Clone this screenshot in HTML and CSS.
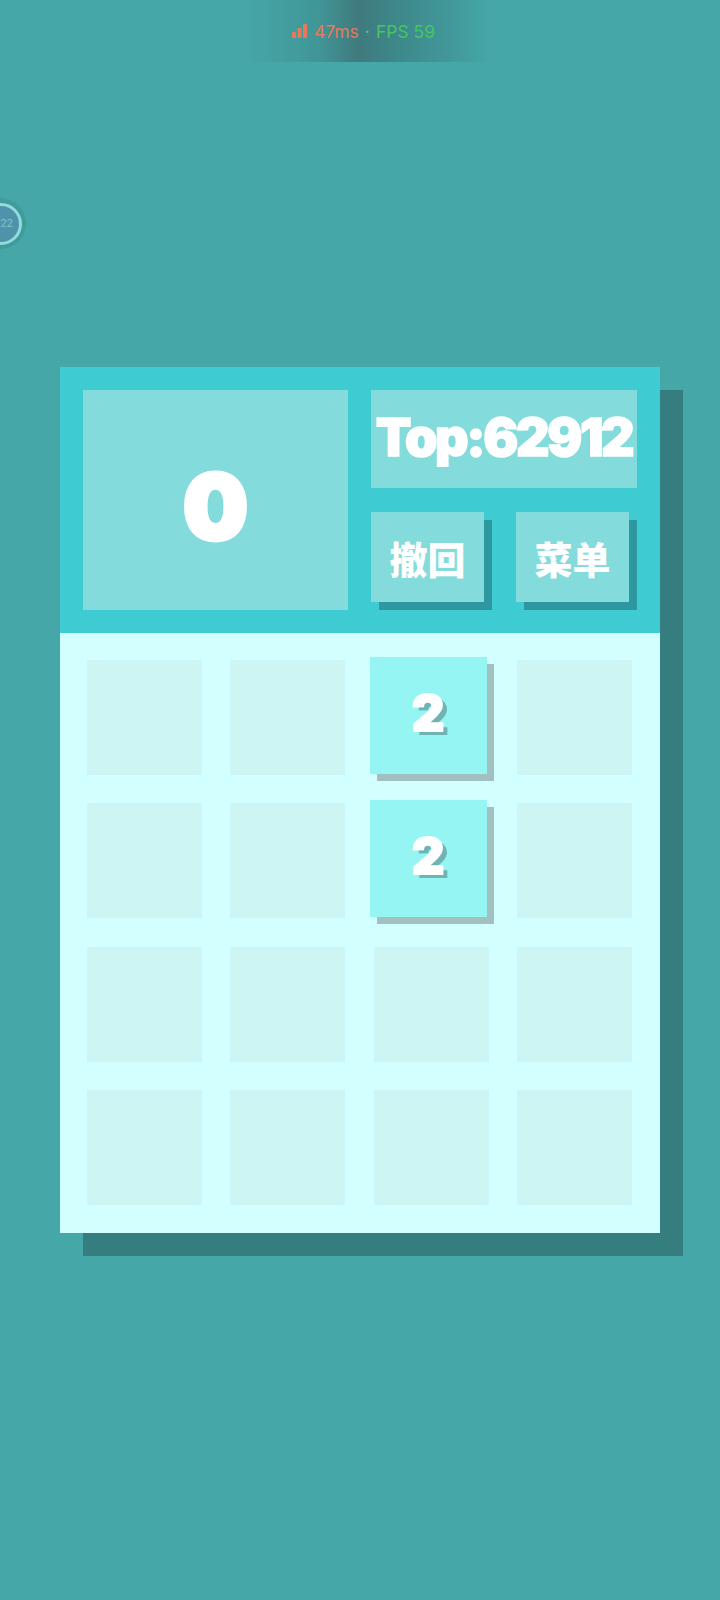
FILE: index.html
```html
<!DOCTYPE html>
<html lang="zh">
<head>
<meta charset="utf-8">
<title>2048</title>
<link rel="stylesheet" href="styles.css">
</head>
<body>
<div class="status">
  <svg class="signal" viewBox="0 0 15 14" width="15" height="14"><rect x="0" y="8" width="4" height="6" rx="0.8"/><rect x="5.5" y="4" width="4" height="10" rx="0.8"/><rect x="11" y="0" width="4" height="14" rx="0.8"/></svg>
  <span class="ping">47ms</span><span class="dot">·</span><span class="fps">FPS 59</span>
</div>
<div class="float-ball"><span class="ball-ring"><span class="ball-text">22</span></span></div>
<main class="game">
  <header class="head">
    <div class="score">0</div>
    <div class="side">
      <div class="top-score">Top:62912</div>
      <div class="actions">
        <button class="btn">撤回</button>
        <button class="btn">菜单</button>
      </div>
    </div>
  </header>
  <section class="board">
    <div class="cell"></div><div class="cell"></div><div class="cell"><div class="tile">2</div></div><div class="cell"></div>
    <div class="cell"></div><div class="cell"></div><div class="cell"><div class="tile">2</div></div><div class="cell"></div>
    <div class="cell"></div><div class="cell"></div><div class="cell"></div><div class="cell"></div>
    <div class="cell"></div><div class="cell"></div><div class="cell"></div><div class="cell"></div>
  </section>
</main>
</body>
</html>
```
FILE: styles.css
```css
* { box-sizing: border-box; }
html, body { margin: 0; padding: 0; }
body {
  position: relative;
  width: 720px;
  height: 1600px;
  overflow: hidden;
  background: #45a7a8;
  font-family: "Inter", "Noto Sans CJK SC", sans-serif;
}
.status {
  height: 62px;
  width: 245px;
  margin-left: 245px;
  padding-right: 8px;
  display: flex;
  align-items: center;
  justify-content: center;
  font-family: "Inter", sans-serif;
  font-size: 17.5px;
  background: linear-gradient(90deg, rgba(52,98,100,0) 0%, rgba(52,98,100,.25) 30%, #3f7a7e 46%, rgba(52,98,100,.45) 62%, rgba(52,98,100,.2) 85%, rgba(52,98,100,0) 100%);
}
.signal { fill: #e8785a; margin-right: 7px; }
.ping { color: #e8785a; }
.dot { color: #6fb5a8; margin: 0 6px; }
.fps { color: #45c566; }
.float-ball {
  position: absolute;
  left: -25px;
  top: 198px;
  width: 51px;
  height: 51px;
  border-radius: 50%;
  background: #439a9b;
  display: flex;
  align-items: center;
  justify-content: center;
}
.ball-ring {
  width: 42px;
  height: 42px;
  border-radius: 50%;
  border: 3px solid #8fdcdc;
  background: #4f93ab;
  position: relative;
}
.ball-text {
  position: absolute;
  left: 18px;
  top: 11px;
  font-family: "Roboto", sans-serif;
  font-size: 11px;
  line-height: 14px;
  color: #7fc4c8;
}
.game {
  width: 600px;
  margin: 305px 0 0 60px;
  box-shadow: 23px 23px 0 #357d7e;
}
.head {
  height: 266px;
  padding: 23px;
  background: #3ecbd2;
  display: flex;
  gap: 23px;
}
.score {
  width: 265px;
  background: #83dbdc;
  color: #fff;
  display: flex;
  align-items: center;
  justify-content: center;
  font-weight: 900;
  font-size: 90px;
  -webkit-text-stroke: 5px #fff;
  padding-top: 12px;
}
.side {
  width: 266px;
  display: flex;
  flex-direction: column;
  gap: 24px;
}
.top-score {
  height: 98px;
  background: #83dbdc;
  color: #fff;
  display: flex;
  align-items: center;
  justify-content: center;
  font-weight: 900;
  font-size: 52px;
  font-variant: small-caps;
  letter-spacing: -2.4px;
  -webkit-text-stroke: 1.5px #fff;
  white-space: nowrap;
  padding-bottom: 4px;
}
.actions {
  display: flex;
  gap: 32px;
}
.btn {
  width: 113px;
  height: 90px;
  padding: 0;
  border: 0;
  background: #83dbdc;
  color: #fff;
  font-family: "Noto Sans CJK SC", sans-serif;
  font-weight: 900;
  font-size: 38px;
  box-shadow: 8px 8px 0 #2e98a0;
}
.board {
  height: 600px;
  padding: 27px;
  background: #d2ffff;
  display: grid;
  grid-template-columns: repeat(4, 115px);
  grid-auto-rows: 115px;
  gap: 28.33px;
}
.cell {
  position: relative;
  background: #ccf5f3;
}
.tile {
  position: absolute;
  left: -4px;
  top: -3px;
  width: 117px;
  height: 117px;
  background: #95f5f2;
  box-shadow: 7px 7px 0 #a3c0c0;
  color: #fff;
  display: flex;
  align-items: center;
  justify-content: center;
  font-weight: 900;
  font-size: 50px;
  -webkit-text-stroke: 2px #fff;
  text-shadow: 5px 4px 0 #6fb3b5;
  padding-bottom: 6px;
}
```
